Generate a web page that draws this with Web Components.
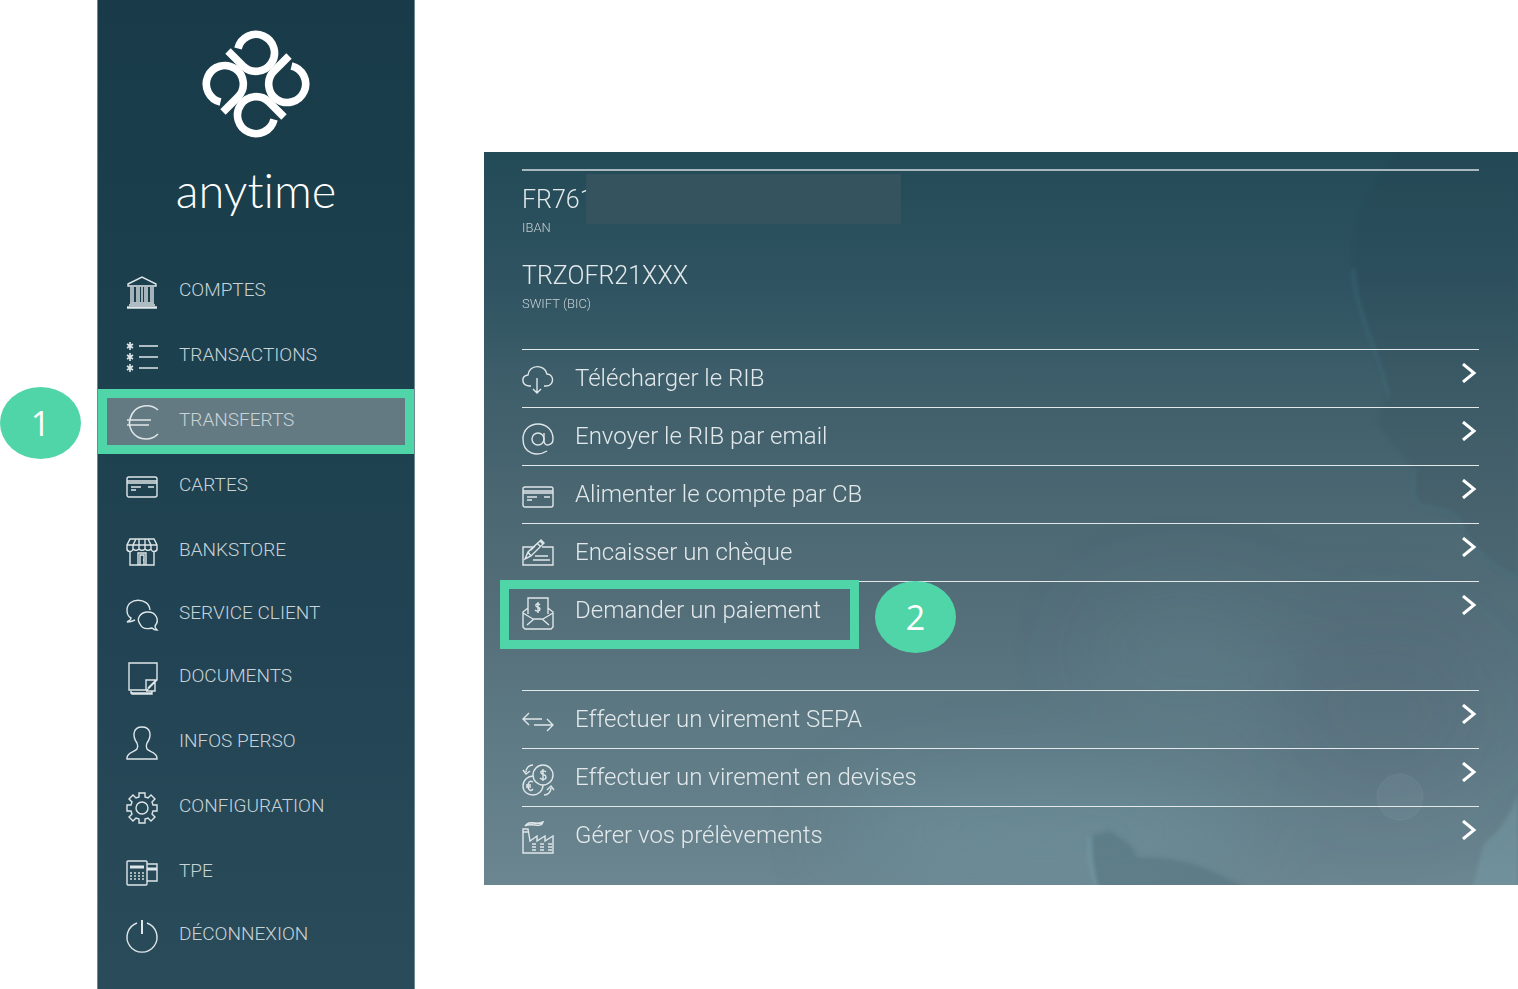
<!DOCTYPE html>
<html lang="fr">
<head>
<meta charset="utf-8">
<title>anytime - Transferts</title>
<style>
  body {
    margin: 0;
    background: #fff;
    font-family: Roboto, "Liberation Sans", sans-serif;
    font-weight: 300;
  }
</style>
</head>
<body>

<bank-page>
  <side-menu slot="menu">
    <menu-item icon="bank">COMPTES</menu-item>
    <menu-item icon="list">TRANSACTIONS</menu-item>
    <menu-item icon="euro" selected>TRANSFERTS<step-badge slot="badge">1</step-badge></menu-item>
    <menu-item icon="card">CARTES</menu-item>
    <menu-item icon="store">BANKSTORE</menu-item>
    <menu-item icon="chat" compact>SERVICE CLIENT</menu-item>
    <menu-item icon="note">DOCUMENTS</menu-item>
    <menu-item icon="person">INFOS PERSO</menu-item>
    <menu-item icon="gear">CONFIGURATION</menu-item>
    <menu-item icon="tpe">TPE</menu-item>
    <menu-item icon="power" compact>DÉCONNEXION</menu-item>
  </side-menu>

  <transfer-panel>
    <account-field slot="account" label="IBAN" masked>FR761</account-field>
    <account-field slot="account" label="SWIFT (BIC)">TRZOFR21XXX</account-field>

    <action-group>
      <action-item icon="download">Télécharger le RIB</action-item>
      <action-item icon="at">Envoyer le RIB par email</action-item>
      <action-item icon="card">Alimenter le compte par CB</action-item>
      <action-item icon="cheque">Encaisser un chèque</action-item>
      <action-item icon="invoice" highlighted>Demander un paiement<step-badge slot="badge">2</step-badge></action-item>
    </action-group>
    <action-group>
      <action-item icon="swap">Effectuer un virement SEPA</action-item>
      <action-item icon="currency">Effectuer un virement en devises</action-item>
      <action-item icon="factory">Gérer vos prélèvements</action-item>
    </action-group>
  </transfer-panel>
</bank-page>

<script>
const ICONS = {
  bank: `
    <path d="M2 8 16 1l14 7v2H2zM3 10h26M4 27h24M3 29h26M1 31h30M1 32h30"/>
    <path d="M5 11v15M7 11v15M11 11v15M13 11v15M16 11v15M19 11v15M21 11v15M25 11v15M27 11v15"/>`,
  list: `
    <path d="M13 5h19M13 16h19M13 27h19"/>
    <path stroke-width="1.6" d="M4 1v8M1 3l6 4M7 3 1 7M4 12v8M1 14l6 4M7 14l-6 4M4 23v8M1 25l6 4M7 25l-6 4"/>`,
  euro: `<path stroke-width="1.6" d="M32 4C24-3 11-1 6 8-1 21 8 33 20 33c5 0 9-2 12-5M1 14h24M1 19h22"/>`,
  card: `
    <rect x="1" y="6" width="30" height="20" rx="2"/>
    <path d="M1 10h30M1 12h30M5 16h10M5 19h5M22 16h6"/>`,
  store: `
    <path d="M4 3h24l3 6v3a3 3 0 0 1-6 1 4 4 0 0 1-6 0 4 4 0 0 1-6 0 4 4 0 0 1-6 0 3 3 0 0 1-6-1V9zM1 9h30M10 3 7 9v5M13 3v10M19 3v10M22 3l3 6v5"/>
    <path d="M4 15v14h24V15M12 29V17h8v12M14 29V19h4v10M17 24h1"/>`,
  chat: `
    <path d="M24 11C23-2 1-2 1 11c0 4 2 7 4 8 0 2-2 3-4 4 4 0 6-1 8-2"/>
    <path d="M26 29c2 2 3 2 5 2-1-1-2-3-2-4 5-6 1-14-7-14s-12 7-8 12c2 5 8 5 12 4z"/>`,
  note: `
    <path d="M3 1h28v17l-10 10H3zM31 18H20v10M5 29v2h21M29 20v9h-9M26 29v3H6v-2M22 26l8-8"/>`,
  person: `<path d="M11 22c1-2 1-4 0-6-5-7-4-16 5-16s10 9 5 16c-1 2-1 4 0 6 2 3 10 3 10 9v1H1v-1c0-6 8-6 10-9z"/>`,
  gear: `
    <path d="M13 5V1h6v4l3 1 3-3 4 4-3 3 1 3h4v6h-4l-1 3 3 3-4 4-3-3-3 1v4h-6v-4l-3-1-3 3-4-4 3-3-1-3H1v-6h4l1-3-3-3 4-4 3 3z"/>
    <circle cx="16" cy="16" r="6"/>`,
  tpe: `
    <rect x="1" y="4" width="20" height="24" rx="1"/>
    <path d="M21 7h10v17H21"/>
    <path stroke-width="3" d="M4 10h14M21 12h10"/>
    <path stroke-width="2" stroke-dasharray="2 1" opacity=".7" d="M5 15v9M9 15v9M13 15v9M17 15v9"/>`,
  power: `<path d="M11 3a15 15 0 1 0 10 0"/><path stroke-width="2" d="M16 0v14"/>`,
  download: `
    <path d="M9 21H7C-1 20-1 11 6 10 7-1 23-1 25 9c8 1 7 12-1 12h-2M15 13v15M11 24l4 4 4-4"/>`,
  at: `
    <circle cx="16" cy="16" r="6"/>
    <path d="M22 10v8c0 6 9 5 9-2C31-4 1-4 1 16c0 15 14 18 24 12"/>`,
  cheque: `
    <path d="M12 8H1v18h30V8H20M13 17h13M11 21h17"/>
    <path d="M3 20 6 13 18 2l3 3L9 17zM6 13l3 4M15 4l3 3M13 7l-4 4M18 2l1-1 3 3-1 1"/>`,
  invoice: `
    <path d="M6 17V1h20v16M6 11l-5 4v15l2 2h26l2-2V15l-5-4M1 16l10 6M31 16l-10 6M5 28l7-6h8l7 6"/>
    <path d="M18 8c-2-2-5-1-4 1s4 1 4 3-3 3-5 1M16 5v11"/>`,
  swap: `<path d="M20 13H1M7 7l-6 6 6 6M12 19h19M25 13l6 6-6 6"/>`,
  currency: `
    <circle cx="21" cy="11" r="10"/>
    <path d="M11 12c-5 0-10 4-10 10s5 9 10 9 10-4 10-10M24 8c-2-2-6-1-5 1s5 1 5 4-4 3-6 1M21 5v12M11 18c-3-2-5 0-5 4s3 6 5 3M4 21h5M4 23h5"/>
    <path d="M11 1C7 1 4 4 4 8M1 6l3 4 4-3M22 31c4 0 7-3 7-7M25 26l4-4 3 4"/>`,
  factory: `
    <path d="M1 31V7h5l2 12 7-5v5l8-5v5l8-5v17zM1 10h5"/>
    <path d="M10 22h4M18 22h4M26 22h4M10 25h4M18 25h4M26 25h4M10 28h4M18 28h4M26 28h4"/>
    <path d="M3 4c5-7 8 0 18-4-2 7-11 0-18 4zM5 2c5-3 8 0 15-1"/>`
};

class LineIcon extends HTMLElement {
  constructor() {
    super();
    this.attachShadow({ mode: 'open' });
  }

  connectedCallback() {
    this.shadowRoot.innerHTML = `
      <style>
        :host {
          display: block;
          flex: none;
          width: 32px;
          height: 32px;
        }
        svg {
          display: block;
          overflow: visible;
          fill: none;
          stroke: #dfe6e9;
          stroke-width: 1.4;
        }
      </style>
      <svg width="32" height="32" viewBox="0 0 32 32" aria-hidden="true">${ICONS[this.getAttribute('name')]}</svg>
    `;
  }
}

class StepBadge extends HTMLElement {
  constructor() {
    super();
    this.attachShadow({ mode: 'open' }).innerHTML = `
      <style>
        :host {
          display: flex;
          align-items: center;
          justify-content: center;
          width: 81px;
          height: 72px;
          border-radius: 50%;
          background: #50d5a8;
          color: #fff;
          font: 400 34px "Open Sans", "Noto Sans", sans-serif;
        }
      </style>
      <slot></slot>
    `;
  }
}

class BrandLogo extends HTMLElement {
  constructor() {
    super();
    const petal = 'M18 35.5A18.5 18.5 0 1 1 13 18L28 33';
    this.attachShadow({ mode: 'open' }).innerHTML = `
      <style>
        :host {
          display: flex;
          flex-direction: column;
          align-items: center;
          gap: 20px;
          color: #fff;
        }
        svg {
          fill: none;
          stroke: #fff;
          stroke-width: 7.6;
        }
        span {
          font: 300 47px/64px Lato, "Liberation Sans", sans-serif;
          font-variant-ligatures: none;
        }
      </style>
      <svg width="108" height="108" viewBox="-54 -54 108 108" aria-hidden="true">
        ${[0, 90, 180, 270].map((a) => `<path d="${petal}" transform="rotate(${a})"/>`).join('')}
      </svg>
      <span>anytime</span>
    `;
  }
}

class SideMenu extends HTMLElement {
  constructor() {
    super();
    this.attachShadow({ mode: 'open' }).innerHTML = `
      <style>
        :host {
          display: block;
          box-sizing: border-box;
          min-height: 100vh;
          padding-top: 30px;
          border: solid #6f8791;
          border-width: 0 1px;
          background: linear-gradient(#193b49, #1c404d 35%, #224353 65%, #2a4c5a);
        }
        nav {
          padding-top: 37px;
        }
      </style>
      <brand-logo></brand-logo>
      <nav><slot></slot></nav>
    `;
  }
}

class MenuItem extends HTMLElement {
  constructor() {
    super();
    this.attachShadow({ mode: 'open' });
  }

  connectedCallback() {
    this.shadowRoot.innerHTML = `
      <style>
        :host {
          display: block;
          position: relative;
        }
        a {
          display: flex;
          align-items: center;
          gap: 21px;
          box-sizing: border-box;
          height: 65px;
          padding-left: 28px;
          color: #c8d3d8;
          font-size: 19px;
          line-height: 24px;
          text-decoration: none;
        }
        span {
          padding-bottom: 4px;
        }
        :host([compact]) a {
          height: 61px;
        }
        :host([selected]) a {
          padding-left: 19px;
          border: 9px solid #50d5a8;
          background: #647a82;
        }
        ::slotted(step-badge) {
          position: absolute;
          right: calc(100% + 17px);
          top: -2px;
        }
      </style>
      <a href="#"><line-icon name="${this.getAttribute('icon')}"></line-icon><span><slot></slot></span></a>
      <slot name="badge"></slot>
    `;
  }
}

class AccountField extends HTMLElement {
  constructor() {
    super();
    this.attachShadow({ mode: 'open' });
  }

  connectedCallback() {
    this.shadowRoot.innerHTML = `
      <style>
        :host {
          display: block;
          position: relative;
          height: 76px;
          color: #e3e9eb;
        }
        .value {
          font-size: 25px;
          line-height: 32px;
        }
        .label {
          margin-top: 4px;
          color: #c4cfd3;
          font-size: 13px;
          line-height: 16px;
        }
        /* hides the rest of the account number */
        .mask {
          display: none;
          position: absolute;
          left: 64px;
          top: -10px;
          width: 315px;
          height: 50px;
          background: #34535f;
        }
        :host([masked]) .mask {
          display: block;
        }
      </style>
      <div class="value"><slot></slot></div>
      <div class="label">${this.getAttribute('label')}</div>
      <div class="mask"></div>
    `;
  }
}

class ActionGroup extends HTMLElement {
  constructor() {
    super();
    this.attachShadow({ mode: 'open' }).innerHTML = `
      <style>
        :host {
          display: block;
        }
      </style>
      <slot></slot>
    `;
  }
}

class ActionItem extends HTMLElement {
  constructor() {
    super();
    this.attachShadow({ mode: 'open' });
  }

  connectedCallback() {
    this.shadowRoot.innerHTML = `
      <style>
        :host {
          display: block;
          position: relative;
        }
        a {
          display: flex;
          align-items: center;
          gap: 21px;
          box-sizing: border-box;
          height: 58px;
          padding-top: 4px;
          border-top: 1px solid #e3e9eb;
          color: #e3e9eb;
          font-size: 24px;
          line-height: 28px;
          text-decoration: none;
        }
        span {
          flex: 1;
          padding-bottom: 6px;
        }
        .chevron {
          padding: 0 2px 16px 0;
          fill: none;
          stroke: #fff;
          stroke-width: 3;
        }
        .frame {
          display: none;
          position: absolute;
          left: -22px;
          top: -1px;
          box-sizing: border-box;
          width: 359px;
          height: 69px;
          border: 9px solid #50d5a8;
          pointer-events: none;
        }
        :host([highlighted]) .frame {
          display: block;
        }
        ::slotted(step-badge) {
          position: absolute;
          left: 353px;
          top: 0;
        }
      </style>
      <a href="#">
        <line-icon name="${this.getAttribute('icon')}"></line-icon>
        <span><slot></slot></span>
        <svg class="chevron" width="16" height="20" viewBox="0 0 16 20" aria-hidden="true"><path d="M2 1 13 10 2 19"/></svg>
      </a>
      <div class="frame"></div>
      <slot name="badge"></slot>
    `;
  }
}

class TransferPanel extends HTMLElement {
  constructor() {
    super();
    this.attachShadow({ mode: 'open' }).innerHTML = `
      <style>
        :host {
          display: block;
          position: relative;
          overflow: hidden;
          background: linear-gradient(#234a57, #2f5361 18%, #3c5d69 30%, #4b6772 48%, #55707b 65%, #5e7a85 80%, #6b8690);
        }
        .backdrop {
          position: absolute;
          inset: 0;
          width: 100%;
          height: 100%;
        }
        .content {
          position: relative;
          padding: 17px 39px 21px 38px;
        }
        .account {
          height: 165px;
          padding-top: 13px;
          border-top: 2px solid #a9b8be;
          box-sizing: content-box;
        }
        .actions {
          display: flex;
          flex-direction: column;
          gap: 51px;
        }
      </style>
      <svg class="backdrop" viewBox="0 0 1034 733" preserveAspectRatio="xMaxYMax slice" aria-hidden="true">
        <defs>
          <filter id="soft" x="-50%" y="-50%" width="200%" height="200%"><feGaussianBlur stdDeviation="40"/></filter>
          <filter id="edge"><feGaussianBlur stdDeviation="2"/></filter>
        </defs>
        <g filter="url(#soft)">
          <ellipse cx="560" cy="680" rx="200" ry="50" fill="#72a0ad" opacity=".35"/>
          <ellipse cx="700" cy="500" rx="100" ry="60" fill="#6b98a3" opacity=".15"/>
          <ellipse cx="900" cy="560" rx="110" ry="90" fill="#4a5c6c" opacity=".22"/>
        </g>
        <path filter="url(#edge)" fill="#27404a" opacity=".1" d="M916 0C880 40 866 80 869 117S890 200 903 245L893 271 929 316Q926 350 936 354L963 363Q980 370 989 392 1010 424 1034 427V0z"/>
        <path filter="url(#edge)" fill="none" stroke="#4f8595" stroke-width="3" opacity=".3" d="M869 117C871 160 895 200 905 247M930 316Q927 350 937 354L963 359Q974 364 979 377M989 392Q1012 420 1034 425"/>
        <g filter="url(#edge)">
          <path fill="#4c6b77" opacity=".4" d="M606 684 626 679 648 694 653 705Q696 704 730 720L763 736H613z"/>
          <path fill="none" stroke="#7fb0bd" stroke-width="3" opacity=".4" d="M613 736Q603 710 606 684"/>
          <path fill="#7aa6b2" opacity=".35" d="M1034 640Q1026 670 1000 692L988 736H1034z"/>
        </g>
        <circle cx="916" cy="645" r="23" fill="#8fa5ad" opacity=".14" stroke="#b0c4ca"/>
      </svg>
      <div class="content">
        <div class="account"><slot name="account"></slot></div>
        <div class="actions"><slot></slot></div>
      </div>
    `;
  }
}

class BankPage extends HTMLElement {
  constructor() {
    super();
    this.attachShadow({ mode: 'open' }).innerHTML = `
      <style>
        :host {
          display: grid;
          grid-template-columns: 318px 1fr;
          column-gap: 69px;
          align-items: start;
          padding-left: 97px;
        }
        main {
          padding-top: 152px;
        }
      </style>
      <slot name="menu"></slot>
      <main><slot></slot></main>
    `;
  }
}

customElements.define('line-icon', LineIcon);
customElements.define('step-badge', StepBadge);
customElements.define('brand-logo', BrandLogo);
customElements.define('side-menu', SideMenu);
customElements.define('menu-item', MenuItem);
customElements.define('account-field', AccountField);
customElements.define('action-group', ActionGroup);
customElements.define('action-item', ActionItem);
customElements.define('transfer-panel', TransferPanel);
customElements.define('bank-page', BankPage);
</script>
</body>
</html>
